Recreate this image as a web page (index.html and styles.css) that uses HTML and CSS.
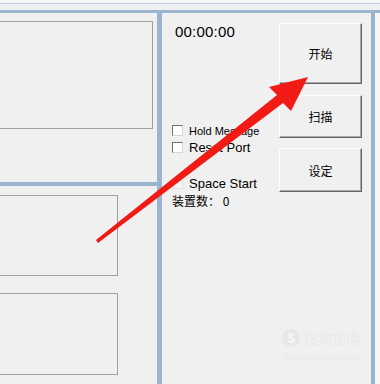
FILE: index.html
```html
<!DOCTYPE html>
<html lang="zh-CN">
<head>
    <meta charset="UTF-8">
    <title>Device Tool</title>
    <link rel="stylesheet" href="styles.css">
</head>
<body>
    <div class="window">
        <div class="titlebar"></div>
        <div class="main">
            <div class="left-col">
                <div class="left-top">
                    <div class="box box-log"></div>
                </div>
                <div class="hbar"></div>
                <div class="left-bottom">
                    <div class="box box-a"></div>
                    <div class="box box-b"></div>
                </div>
            </div>
            <div class="vbar"></div>
            <div class="right-panel">
                <div class="info">
                    <div class="timer">00:00:00</div>
                    <label class="check row-hold"><span class="tick"></span><span class="small">Hold Message</span></label>
                    <label class="check row-reset"><span class="tick"></span><span>Reset Port</span></label>
                    <label class="check row-space"><span class="tick disabled"></span><span>Space Start</span></label>
                    <div class="count">装置数： 0</div>
                </div>
                <div class="buttons">
                    <button class="btn btn-start">开始</button>
                    <button class="btn btn-scan">扫描</button>
                    <button class="btn btn-set">设定</button>
                </div>
            </div>
            <div class="vbar-right"></div>
            <div class="edge"></div>
        </div>
    </div>

    <div class="watermark">
        <div class="wm-logo"><span class="wm-s">S</span>搜狗指南</div>
        <div class="wm-url">zhinan.sogou.com</div>
    </div>

    <svg class="arrow" width="380" height="384" viewBox="0 0 380 384">
        <polygon points="96,240 277,95 269,87 308,77 291,111 283,103 98,243" fill="#f21a14"/>
    </svg>
</body>
</html>
```

FILE: styles.css
```css
body {
    margin: 0;
    width: 380px;
    height: 384px;
    overflow: hidden;
    background-color: #f0f0f0;
    font-family: 'Liberation Sans', Arial, sans-serif;
    color: #000;
    position: relative;
}
.window {
    display: flex;
    flex-direction: column;
    height: 384px;
}
.titlebar {
    height: 3px;
    background-color: #f7f7f7;
    border-bottom: 1px solid #c4d3e6;
    margin-bottom: 6px;
}
.main {
    flex: 1;
    display: flex;
    border-top: 3px solid #9bb5d0;
}
.left-col {
    width: 157px;
    display: flex;
    flex-direction: column;
}
.left-top {
    height: 169px;
    padding-top: 8px;
    box-sizing: border-box;
}
.box {
    border: 1px solid #a0a0a0;
    border-left: none;
    box-sizing: border-box;
}
.box-log {
    width: 153px;
    height: 108px;
}
.hbar {
    height: 4px;
    background-color: #9bb5d0;
}
.left-bottom {
    padding-top: 9px;
}
.box-a {
    width: 118px;
    height: 81px;
}
.box-b {
    width: 118px;
    height: 82px;
    margin-top: 17px;
}
.vbar {
    width: 5px;
    background-color: #9bb5d0;
}
.right-panel {
    width: 209px;
    display: flex;
}
.info {
    flex: 1;
    padding-left: 10px;
    padding-top: 11px;
    display: flex;
    flex-direction: column;
}
.timer {
    font-size: 15px;
    line-height: 16px;
    height: 16px;
    padding-left: 3px;
    letter-spacing: 0.2px;
    margin-bottom: 82px;
}
.check {
    display: flex;
    align-items: center;
    height: 17px;
    font-size: 13px;
}
.check .small {
    font-size: 11px;
}
.row-space {
    margin-top: 19px;
}
.tick {
    width: 11px;
    height: 11px;
    box-sizing: border-box;
    background-color: #fff;
    border-top: 1px solid #6f6f6f;
    border-left: 1px solid #6f6f6f;
    border-right: 1px solid #d4d4d4;
    border-bottom: 1px solid #d4d4d4;
    margin-right: 6px;
}
.tick.disabled {
    background-color: #f4f4f4;
    border-color: #e2e2e2;
}
.count {
    height: 17px;
    line-height: 17px;
    font-size: 12px;
    font-family: 'Noto Sans CJK SC', sans-serif;
}
.buttons {
    width: 83px;
    margin-right: 9px;
    padding-top: 10px;
    display: flex;
    flex-direction: column;
}
.btn {
    background-color: #f0f0f0;
    border-top: 1px solid #fdfdfd;
    border-left: 1px solid #fdfdfd;
    border-right: 1px solid #646464;
    border-bottom: 1px solid #646464;
    box-shadow: inset -1px -1px 0 #a8a8a8;
    font-family: 'Noto Sans CJK SC', sans-serif;
    font-size: 12px;
    color: #000;
    padding: 0;
}
.btn-start {
    height: 61px;
}
.btn-scan {
    height: 43px;
    margin-top: 11px;
}
.btn-set {
    height: 44px;
    margin-top: 10px;
}
.vbar-right {
    width: 4px;
    background-color: #9bb5d0;
}
.edge {
    flex: 1;
    background-color: #f6f6f6;
}
.watermark {
    position: absolute;
    left: 282px;
    top: 328px;
    color: #e7e7e7;
    text-shadow: 0 0 1px #fafafa;
    font-family: 'Noto Sans CJK SC', sans-serif;
}
.wm-logo {
    font-size: 14px;
    line-height: 20px;
    display: flex;
    align-items: center;
    gap: 4px;
}
.wm-s {
    width: 18px;
    height: 18px;
    border-radius: 50%;
    background-color: #e7e7e7;
    color: #f5f5f5;
    font-size: 13px;
    font-weight: bold;
    text-align: center;
    line-height: 18px;
}
.wm-url {
    font-size: 9px;
    margin-top: 4px;
    font-family: 'Liberation Sans', Arial, sans-serif;
    letter-spacing: 0.3px;
}
.arrow {
    position: absolute;
    left: 0;
    top: 0;
    pointer-events: none;
}
```
